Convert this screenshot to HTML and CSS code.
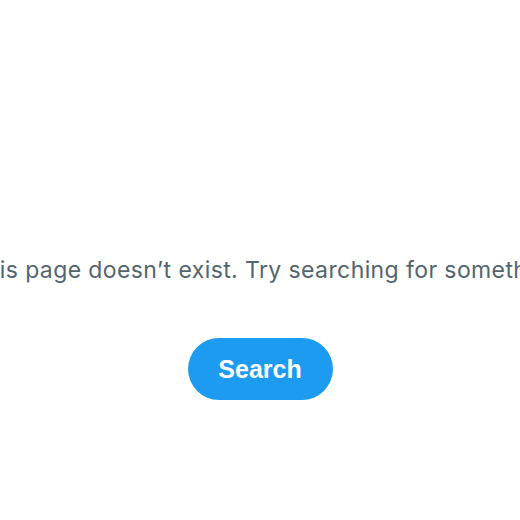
FILE: index.html
```html
<!DOCTYPE html>
<html>
<head>
<meta charset="utf-8">
<link rel="stylesheet" href="styles.css">
</head>
<body>
<main class="page">
  <p class="message">Hmm...this page doesn’t exist. Try searching for something else.</p>
  <button class="search-btn">Search</button>
</main>
</body>
</html>
```
FILE: styles.css
```css
html, body {
  margin: 0;
  padding: 0;
  background: #ffffff;
}
.page {
  width: 520px;
  height: 520px;
  overflow: hidden;
  display: flex;
  flex-direction: column;
  align-items: center;
  padding-top: 254px;
  box-sizing: border-box;
}
.message {
  margin: 0;
  flex-shrink: 0;
  white-space: nowrap;
  font-family: "Inter", "Liberation Sans", sans-serif;
  font-size: 23px;
  letter-spacing: 0.4px;
  line-height: 32px;
  color: #536471;
}
.search-btn {
  margin-top: 52px;
  width: 145px;
  height: 62px;
  border: none;
  border-radius: 31px;
  background: #1d9bf0;
  color: #ffffff;
  font-family: "Liberation Sans", Arial, sans-serif;
  font-weight: 700;
  font-size: 25px;
  padding: 0;
}
```
